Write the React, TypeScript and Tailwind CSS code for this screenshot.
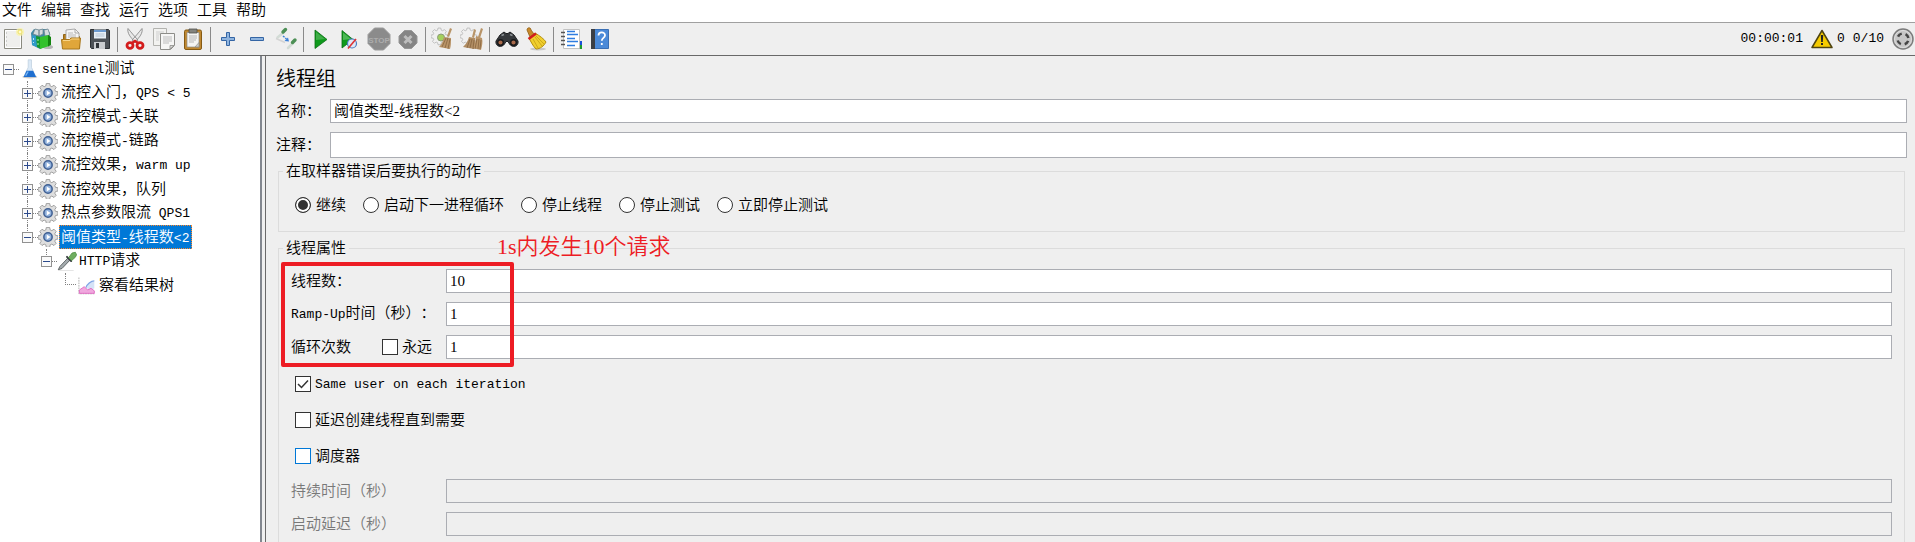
import React from "react";

const CJK = "font-['Liberation_Serif','Noto_Sans_CJK_SC',sans-serif]";

/* Mixed-script label: Latin runs are set monospaced, Chinese runs in the CJK face. */
function Mixed({ text }: { text: string }) {
  const parts = text.split(/([\x20-\x7e]+)/).filter(Boolean);
  return (
    <>
      {parts.map((p, i) =>
        /^[\x20-\x7e]/.test(p) ? (
          <span key={i} className="font-['Liberation_Mono',monospace] text-[13px]">
            {p}
          </span>
        ) : (
          <span key={i}>{p}</span>
        ),
      )}
    </>
  );
}

function Svg({ children, size = 24 }: { children: React.ReactNode; size?: number }) {
  return (
    <svg width={size} height={size} viewBox="0 0 24 24" fill="none" aria-hidden="true" className="block shrink-0">
      {children}
    </svg>
  );
}

const NewIcon = () => (
  <Svg>
    <path d="M3.500 2.500h17v19h-17z" fill="#f4f4f4" stroke="#8a8a80" />
    <path d="M4.500 3.500h15v17h-15z" fill="#efefed" stroke="#fff" />
    <path d="M5 6h1M5 10h1M5 14h1M5 18h1" stroke="#aaa" />
    <circle cx="19" cy="5" r="4" fill="#fbf3a0" opacity=".7" />
    <circle cx="19" cy="5" r="2" fill="#fffbd0" stroke="#efe26a" />
  </Svg>
);
const TemplatesIcon = () => (
  <Svg>
    <ellipse cx="18" cy="20" rx="5" ry="2" fill="#b5b5b5" />
    <path d="M1 6l3-4 5 1 4-1 4 0 3 4-1 12-9 4-8-4z" fill="#3d88a5" />
    <path d="M3 7l2-5 4 1v6zM9 3l4-1v5l-4 2zM14 3l4-1 2 6-5 1z" fill="#d5dcdf" stroke="#6f8791" strokeWidth=".8" />
    <path d="M2 8l5 1v11l-5-2z" fill="#2f9ac8" />
    <path d="M3.500 11v2M3.500 15v1" stroke="#bfe5f5" />
    <path d="M6 9l5 1v12l-4-2z" fill="#159a2c" />
    <path d="M10 10l9-2v11l-9 3z" fill="#33c22c" />
    <path d="M18 8l3 2v8l-3 1.500z" fill="#13840f" />
    <path d="M8 12v2M8 16v2" stroke="#a9efaa" />
  </Svg>
);
const OpenIcon = () => (
  <Svg>
    <path d="M4.500 7.500h5l2 2h9v12h-16z" fill="#b8801c" stroke="#936413" />
    <path d="M7 3l9-1 4 4v8H7z" fill="#f5f5f5" stroke="#999" strokeWidth=".8" />
    <path d="M16 2v4h4" stroke="#999" strokeWidth=".8" />
    <path d="M9 6h5M9 8h8M9 10h8" stroke="#aaa" strokeWidth=".8" />
    <path d="M2.500 12.500h8l1.500-1.500h9.500l-1 11h-17z" fill="#e0a63a" stroke="#a8761a" />
    <path d="M4 13.500h7l1.500-1.500H20" stroke="#f7d488" />
  </Svg>
);
const SaveIcon = () => (
  <Svg>
    <path d="M2.500 2.500h18l1 1v18h-18l-1-1z" fill="#4c5157" stroke="#2c3035" />
    <path d="M6 2.500h12v9H6z" fill="#e9f0f7" />
    <path d="M6 3h12v2H6z" fill="#6d9bd0" />
    <path d="M7.500 7h9M7.500 9h9" stroke="#b3c2d2" />
    <path d="M6 15h11v7H6z" fill="#c9ccd0" />
    <path d="M8 16h3v5H8z" fill="#2f3338" />
  </Svg>
);
const CutIcon = () => (
  <Svg>
    <path d="M5 1.500c-1 4 2 9 8 14l2-2.500C11 9 8 5 5 1.500zM19 1.500c1 4-2 9-8 14L9 13c4-4 7-8 10-11.500z" fill="#e8e8e8" stroke="#8b8b8b" strokeWidth=".9" />
    <ellipse cx="7" cy="18.500" rx="3" ry="2.800" stroke="#d31c1c" strokeWidth="2.800" />
    <ellipse cx="17" cy="18.500" rx="3" ry="2.800" stroke="#d31c1c" strokeWidth="2.800" />
    <path d="M9 16l3-2 3 2" stroke="#d31c1c" strokeWidth="2.500" />
  </Svg>
);
const CopyIcon = () => (
  <Svg>
    <path d="M1.500 1.500h13v17h-13z" fill="#f2f2f0" stroke="#b3b3af" />
    <path d="M4 5h8M4 7h8M4 9h3M4 11h3M4 13h3" stroke="#cfcfcf" />
    <path d="M8.500 6.500h14v12l-4 4h-10z" fill="#f6f6f5" stroke="#8d8d89" />
    <path d="M11 10h9M11 12h9M11 14h9M11 16h6" stroke="#bdbdbd" />
    <path d="M22 18.500h-4V22z" fill="#ddd" stroke="#8d8d89" strokeWidth=".8" />
  </Svg>
);
const PasteIcon = () => (
  <Svg>
    <rect x="3.500" y="3" width="17" height="19.500" rx="1.500" fill="#c08830" stroke="#855a14" />
    <path d="M6 5.500h12v14.500H6z" fill="#f4f4f2" stroke="#8d8d89" strokeWidth=".7" />
    <path d="M8 2h8v4H8z" fill="#83837d" stroke="#50504c" strokeWidth=".8" />
    <path d="M8 9h8M8 11h8M8 13h7M8 15h5" stroke="#b5b5b5" />
    <path d="M18 15.500V20h-4z" fill="#cfcfca" stroke="#8d8d89" strokeWidth=".7" />
  </Svg>
);
const PlusIcon = () => (
  <Svg>
    <path d="M10.500 5.500h3v5h5v3h-5v5h-3v-5h-5v-3h5z" fill="#8fb4de" stroke="#3465a4" />
  </Svg>
);
const MinusIcon = () => (
  <Svg>
    <path d="M5.500 10.500h13v3h-13z" fill="#8fb4de" stroke="#3465a4" />
  </Svg>
);
const ToggleIcon = () => (
  <Svg>
    <path d="M3.500 10.500l6-5M14 21l5-5" stroke="#d3dcd6" strokeWidth="2.500" strokeLinecap="round" />
    <path d="M9 5l2.500-2.500M18.500 15.500l2.500-2.500" stroke="#4c8f55" strokeWidth="3.400" strokeLinecap="round" />
    <path d="M2 11.500l9 4" stroke="#d4d4d4" strokeWidth="1.500" />
    <path d="M9 9l3.500 3" stroke="#3c80d8" strokeWidth="1.500" strokeDasharray="2 1" />
    <path d="M15 14.500l-4.500-.5L14 10.500z" fill="#3c80d8" />
  </Svg>
);
const StartIcon = () => (
  <Svg>
    <path d="M6 3l12 9.500L6 21.500z" fill="#0f9a1c" stroke="#0b6e14" strokeWidth=".8" />
    <path d="M7 5l9 7-9 1z" fill="#3fae48" />
  </Svg>
);
const StartNoPauseIcon = () => (
  <Svg>
    <path d="M4 3.500l11 9L4 21z" fill="#0f9a1c" stroke="#0b6e14" strokeWidth=".8" />
    <path d="M5 5.500l8 6.500-8 1z" fill="#4cb855" />
    <circle cx="14" cy="16.500" r="4.500" fill="#dfe9f6" stroke="#4a7cc0" strokeWidth="1.200" />
    <path d="M10 21.500l8-9.500" stroke="#d33" strokeWidth="1.600" />
  </Svg>
);
const StopIcon = () => (
  <Svg>
    <path d="M7.500 1h9L23 7.500v9L16.500 23h-9L1 16.500v-9z" fill="#8b8b8b" stroke="#9b9b9b" />
    <text x="12" y="15.500" textAnchor="middle" fontSize="8" fontWeight="bold" fontFamily="Liberation Sans" fill="#adadad">
      STOP
    </text>
  </Svg>
);
const ShutdownIcon = () => (
  <Svg>
    <path d="M8.500 3.500h7l5.500 5.500v7l-5.500 5.500h-7L3 16V9z" fill="#858585" stroke="#979797" />
    <path d="M8.500 9l7 7M15.500 9l-7 7" stroke="#bdbdbd" strokeWidth="3" />
  </Svg>
);
const GEAR =
  "M10 1.500h4l.6 3 2 .9 2.600-1.700 2.600 2.700-1.700 2.600.9 2 3 .6v3.800l-3 .6-.9 2 1.700 2.600-2.600 2.600-2.600-1.700-2 .9-.6 3h-4l-.6-3-2-.9-2.600 1.700-2.600-2.600 1.700-2.600-.9-2-3-.6v-3.800l3-.6.9-2-1.700-2.600 2.600-2.700 2.600 1.700 2-.9z";
const ClearIcon = () => (
  <Svg>
    <g transform="translate(0 0) scale(.7)">
      <path d={GEAR} fill="#f0f0f0" stroke="#adadad" />
    </g>
    <circle cx="10" cy="10.500" r="3.500" fill="#a4d05c" stroke="#8a9a78" />
    <path d="M19 1l2 1-3 8-2-1z" fill="#b89468" />
    <path d="M13 10l7 1c0 4 0 8-1 11L8 20c3-3 4-6 5-10z" fill="#b99468" />
    <path d="M15 11l-4 9M17 11l-3 10M19 12l-2 10" stroke="#86643f" strokeWidth=".8" />
  </Svg>
);
const ClearAllIcon = () => (
  <Svg>
    <g transform="translate(0 0) scale(.7)">
      <path d={GEAR} fill="#f0f0f0" stroke="#adadad" />
    </g>
    <path d="M14 2l2 1-2 8-2-1zM21 1l2 1-3 9-2-1z" fill="#b89468" />
    <path d="M9 10l6 1c1 4 0 8-1 11l-11-2c3-3 5-6 6-10z" fill="#b08c62" />
    <path d="M16 9l6 2c1 4 0 8-1 12l-9-2c3-3 4-7 4-12z" fill="#b99468" />
    <path d="M10 12L7 21M12 12l-2 9M14 13l-1 9M17 12l-2 10M19 12l-1 10M21 13l-1 9" stroke="#86643f" strokeWidth=".8" />
  </Svg>
);
const SearchIcon = () => (
  <Svg>
    <path d="M5 8l4-3 2 1.500h2L15 5l4 3 4 6c1 6-6 7-8.500 3L13 14.500h-2L9.500 17C7 21 0 20 1 14z" fill="#35383b" stroke="#1d1f21" />
    <path d="M6.500 8.500l2.500-1M15 7.500l2.500 1" stroke="#8d9296" strokeWidth="1.500" />
    <circle cx="5.500" cy="15.500" r="2.800" fill="#a96a4a" stroke="#16181a" strokeWidth="1.400" />
    <circle cx="18.500" cy="15.500" r="2.800" fill="#a96a4a" stroke="#16181a" strokeWidth="1.400" />
  </Svg>
);
const BroomIcon = () => (
  <Svg>
    <ellipse cx="14" cy="22" rx="8" ry="1.500" fill="#c8c8c8" />
    <path d="M3 3c0-3 4-3 4 0l3 4-4 3z" fill="#c98a2b" stroke="#8f5d12" strokeWidth=".8" />
    <path d="M5 11l6-5c5 3 9 6 11 9-2 4-6 7-10 7-3-3-5-7-7-11z" fill="#f0cf2e" stroke="#b48f10" />
    <path d="M9 12l5 9M11 10l7 9M12 9l8 8" stroke="#c4a015" strokeWidth=".8" />
    <path d="M4.500 12l7.500-5.500" stroke="#d21e1e" strokeWidth="2.600" />
  </Svg>
);
const FunctionIcon = () => (
  <Svg>
    <path d="M18 14h5v4h-5z" fill="#1a4fd8" />
    <path d="M18 18h5v4h-5z" fill="#1b9a2a" />
    <path d="M4.500 2.500h16v19h-16z" fill="#fff" stroke="#c2c2c2" />
    <path d="M2 5.500h4M2 9.500h4M2 13.500h4M2 17.500h4" stroke="#555" strokeWidth="1.600" />
    <path d="M8 4.500h8M8 7.500h11M8 11.500h8M8 14.500h11M8 18.500h8" stroke="#2f7de0" strokeWidth="1.300" />
  </Svg>
);
const HelpIcon = () => (
  <Svg>
    <path d="M3.500 2.500h17v19h-17z" fill="#4b8ad8" stroke="#3a6fb4" />
    <path d="M3 2h4v20H3z" fill="#3b3f45" />
    <path d="M10.500 8.500c0-4 6.500-4 6.500-.3 0 2.800-3.200 2.600-3.200 5.600M13.800 16v2" stroke="#fff" strokeWidth="1.800" />
  </Svg>
);

type Tool = { label: string; icon: () => React.ReactElement } | null;
const tools: Tool[] = [
  { label: "新建", icon: NewIcon },
  { label: "模板", icon: TemplatesIcon },
  { label: "打开", icon: OpenIcon },
  { label: "保存", icon: SaveIcon },
  null,
  { label: "剪切", icon: CutIcon },
  { label: "复制", icon: CopyIcon },
  { label: "粘贴", icon: PasteIcon },
  null,
  { label: "展开全部", icon: PlusIcon },
  { label: "收起全部", icon: MinusIcon },
  { label: "切换", icon: ToggleIcon },
  null,
  { label: "启动", icon: StartIcon },
  { label: "不停顿开始", icon: StartNoPauseIcon },
  { label: "停止", icon: StopIcon },
  { label: "关闭", icon: ShutdownIcon },
  null,
  { label: "清除", icon: ClearIcon },
  { label: "清除全部", icon: ClearAllIcon },
  null,
  { label: "查找", icon: SearchIcon },
  { label: "重置搜索", icon: BroomIcon },
  null,
  { label: "函数助手", icon: FunctionIcon },
  { label: "帮助", icon: HelpIcon },
];

const FlaskIcon = () => (
  <Svg size={20}>
    <ellipse cx="13" cy="21.500" rx="9" ry="1.800" fill="#c9c9c9" />
    <path d="M11 1h4v9l5 11H6l5-11z" fill="#dbe9f6" stroke="#b9cbdd" strokeWidth=".8" />
    <path d="M9 14h8l3.500 7.500h-15z" fill="#1f6fd0" />
    <path d="M11 15l-3 5" stroke="#7cb8f5" strokeWidth="1.500" />
  </Svg>
);
const GearIcon = () => (
  <Svg size={20}>
    <g transform="translate(0 -1)">
      <path d={GEAR} fill="#dedede" stroke="#a0a0a0" strokeWidth="1.200" />
      <circle cx="12" cy="13" r="5" fill="#8fb0dc" stroke="#3f5f92" strokeWidth="1.800" />
      <path d="M10.500 10l4.500 3-4.500 3z" fill="#fff" />
    </g>
  </Svg>
);
const PipetteIcon = () => (
  <Svg size={20}>
    <path d="M2 23.500h18" stroke="#ddd" />
    <path d="M1.500 22.500l2-4L13 8.500l2.500 2.500L6 21z" fill="#a4abae" stroke="#4f5557" />
    <path d="M12 7l5 5" stroke="#3b4043" strokeWidth="2.400" strokeLinecap="round" />
    <path d="M14 8l4-5.500 4-1 1.500 3-1.500 3-4.500 4z" fill="#6fae60" stroke="#4f8f44" />
  </Svg>
);
const ChartIcon = () => (
  <Svg size={20}>
    <path d="M3.500 3v19.500H23" stroke="#a5a5a5" strokeDasharray="2 1" />
    <path d="M12 15c1-4 6-8 10-7v8l-5 3z" fill="#d5e2f7" />
    <path d="M12 15c1-4 6-8 10-8" stroke="#7fa4e6" strokeWidth="1.500" />
    <path d="M4 22v-4l6-4 4 4 4-2 4 3v3z" fill="#f0a8de" stroke="#e05fbe" />
  </Svg>
);

function Expander({ open }: { open: boolean }) {
  return (
    <button
      type="button"
      aria-label={open ? "收起" : "展开"}
      className="relative flex h-[11px] w-[11px] shrink-0 items-center justify-center border border-[#919191] bg-[#fafafa]"
    >
      <span className="h-px w-[7px] bg-[#2c4a8c]" />
      {!open && <span className="absolute h-[7px] w-px bg-[#2c4a8c]" />}
    </button>
  );
}

const threadGroups = [
  "流控入门，QPS < 5",
  "流控模式-关联",
  "流控模式-链路",
  "流控效果，warm up",
  "流控效果，队列",
  "热点参数限流 QPS1",
];

function Guide() {
  return <span className="w-[5px] shrink-0 border-t border-dotted border-[#808080]" />;
}

function Tree() {
  return (
    <nav aria-label="测试计划" className="w-[262px] shrink-0 border-r-2 border-[#82878f] bg-white pt-px text-[15px] leading-6 whitespace-nowrap">
      <div className="flex h-6 items-center pl-[3px]">
        <Expander open />
        <Guide />
        <FlaskIcon />
        <span className="pl-[3px]">
          <Mixed text="sentinel测试" />
        </span>
      </div>
      <ul>
        {threadGroups.map((name) => (
          <li key={name} className="relative flex h-6 items-center pl-[22px]">
            <span className="absolute top-0 left-[27px] h-full border-l border-dotted border-[#808080]" />
            <Expander open={false} />
            <Guide />
            <GearIcon />
            <span className="pl-[3px]">
              <Mixed text={name} />
            </span>
          </li>
        ))}
        <li>
          <div className="relative flex h-6 items-center pl-[22px]">
            <span className="absolute top-0 left-[27px] h-2 border-l border-dotted border-[#808080]" />
            <Expander open />
            <Guide />
            <GearIcon />
            <span className="ml-px h-6 border border-dotted border-[#ff8728] bg-[#0078d7] pr-[2px] pl-px leading-[22px] text-white">
              <Mixed text="阈值类型-线程数<2" />
            </span>
          </div>
          <ul>
            <li>
              <div className="relative flex h-6 items-center pl-[41px]">
                <span className="absolute top-0 left-[46px] h-2 border-l border-dotted border-[#808080]" />
                <Expander open />
                <Guide />
                <PipetteIcon />
                <span className="pl-[2px]">
                  <Mixed text="HTTP请求" />
                </span>
              </div>
              <div className="flex h-6 items-center pl-[65px]">
                <span className="mb-3 h-3 w-[11px] shrink-0 border-b border-l border-dotted border-[#808080]" />
                <ChartIcon />
                <span className="pl-[3px]">察看结果树</span>
              </div>
            </li>
          </ul>
        </li>
      </ul>
    </nav>
  );
}

function Radio({ label, checked }: { label: string; checked?: boolean }) {
  return (
    <label className="flex items-center gap-[5px]">
      <input
        type="radio"
        name="on-error"
        defaultChecked={checked}
        className="h-4 w-4 appearance-none rounded-full border border-[#333] bg-white checked:bg-[#333] checked:shadow-[inset_0_0_0_2px_#fff]"
      />
      {label}
    </label>
  );
}

function Check({ label, checked, active }: { label: string; checked?: boolean; active?: boolean }) {
  return (
    <label className="flex items-center gap-1">
      <span className="relative block h-4 w-4">
        <input
          type="checkbox"
          defaultChecked={checked}
          className={
            "peer block h-4 w-4 appearance-none border bg-white " + (active ? "border-[#0078d7]" : "border-[#333]")
          }
        />
        <svg viewBox="0 0 16 16" className="pointer-events-none absolute inset-0 hidden h-4 w-4 peer-checked:block" aria-hidden="true">
          <path d="M3 8l3.500 3.500L13 4.500" fill="none" stroke="#333" strokeWidth="1.500" />
        </svg>
      </span>
      <span>
        <Mixed text={label} />
      </span>
    </label>
  );
}

const inputBase = "h-6 min-w-0 flex-1 border border-[#abadb3] bg-white px-[3px] text-black outline-none";

function Field({ id, label, value, disabled, extra }: { id: string; label: string; value?: string; disabled?: boolean; extra?: React.ReactNode }) {
  return (
    <div className="flex items-center">
      <div className="flex w-[155px] shrink-0 items-center justify-between pr-[14px]">
        <label htmlFor={id} className={"whitespace-nowrap " + (disabled ? "text-[#787878]" : "")}>
          <Mixed text={label} />
        </label>
        {extra}
      </div>
      <input id={id} defaultValue={value} disabled={disabled} className={inputBase + " disabled:bg-[#efefef]"} />
    </div>
  );
}

const box = "mx-[2px] min-w-0 border border-[#dcdcdc] px-3";
const legend = "-ml-2 px-[3px] leading-5";

export default function App() {
  return (
    <div
      className={
        "flex h-screen flex-col overflow-hidden bg-[#efefef] text-[15px] leading-5 font-[350] text-black [text-spacing-trim:space-all] " +
        CJK
      }
    >
      <nav className="flex h-[22px] shrink-0 items-start gap-[9px] bg-white pl-[2px] font-['Liberation_Sans','Noto_Sans_CJK_SC',sans-serif]">
        {["文件", "编辑", "查找", "运行", "选项", "工具", "帮助"].map((m) => (
          <button key={m} type="button">
            {m}
          </button>
        ))}
      </nav>
      <div className="flex h-[34px] shrink-0 items-center border-t border-b border-t-[#a0a0a0] border-b-[#696969] pl-px">
        {tools.map((t, i) =>
          t ? (
            <button key={i} type="button" aria-label={t.label} className="w-[29px] shrink-0">
              <t.icon />
            </button>
          ) : (
            <span key={i} className="h-[25px] w-1.5 shrink-0 border-l border-[#8a8a8a]" />
          ),
        )}
        <div className="ml-auto flex items-center font-['Liberation_Mono',monospace] text-[13px]">
          <span className="mr-2">00:00:01</span>
          <button type="button" aria-label="日志" className="mr-1">
            <svg width="22" height="20" viewBox="0 0 22 20" aria-hidden="true" className="block">
              <path d="M11 1.500L21 18.500H1z" fill="#f5cb00" stroke="#4f4410" strokeWidth="1.500" strokeLinejoin="round" />
              <path d="M9.800 6h2.400l-.4 7h-1.600zM10 14h2v2h-2z" fill="#222" />
            </svg>
          </button>
          <span className="mr-2">0</span>
          <span className="mr-2">0/10</span>
          <svg width="22" height="22" viewBox="0 0 22 22" fill="none" aria-hidden="true" className="mr-px">
            <circle cx="11" cy="11" r="10" fill="#c6c6c6" stroke="#7c7c7c" strokeWidth="1.500" />
            <circle cx="11" cy="11" r="8.500" stroke="#dedede" />
            <circle cx="11" cy="11" r="5.500" stroke="#454545" strokeWidth="2.500" strokeDasharray="4.640 4" strokeDashoffset="-2" />
          </svg>
        </div>
      </div>
      <div className="flex min-h-0 flex-1">
        <Tree />
        <main className="ml-[3px] min-w-0 flex-1 overflow-hidden border-l border-[#696969] pt-[11px] pr-2 pl-[10px]">
          <h1 className="text-[20px] leading-6">线程组</h1>
          <div className="mt-2 flex items-center">
            <label htmlFor="name" className="w-[54px] shrink-0">
              名称：
            </label>
            <input id="name" defaultValue="阈值类型-线程数<2" className={inputBase + " pb-[3px]"} />
          </div>
          <div className="mt-[9px] flex items-center">
            <label htmlFor="comment" className="w-[54px] shrink-0">
              注释：
            </label>
            <input id="comment" className="h-[26px] min-w-0 flex-1 border border-[#abadb3] bg-white px-[3px] outline-none" />
          </div>
          <fieldset className={box + " mt-[3px] pt-[14px] pb-4"}>
            <legend className={legend}>在取样器错误后要执行的动作</legend>
            <div className="flex gap-[17px] pl-1 whitespace-nowrap">
              <Radio label="继续" checked />
              <Radio label="启动下一进程循环" />
              <Radio label="停止线程" />
              <Radio label="停止测试" />
              <Radio label="立即停止测试" />
            </div>
          </fieldset>
          <div className="relative mt-[6px]">
            <fieldset className={box + " pt-[11px] pb-4"}>
              <legend className={legend}>线程属性</legend>
              <div className="flex flex-col gap-[9px]">
                <Field id="threads" label="线程数：" value="10" />
                <Field id="ramp" label="Ramp-Up时间（秒）：" value="1" />
                <Field id="loops" label="循环次数" value="1" extra={<Check label="永远" />} />
              </div>
              <div className="mt-[7px] mb-[5px] flex flex-col items-start pl-1">
                <div className="flex h-9 items-center">
                  <Check label="Same user on each iteration" checked />
                </div>
                <div className="flex h-9 items-center">
                  <Check label="延迟创建线程直到需要" />
                </div>
                <div className="flex h-9 items-center">
                  <Check label="调度器" active />
                </div>
              </div>
              <div className="flex flex-col gap-[9px]">
                <Field id="duration" label="持续时间（秒）" disabled />
                <Field id="delay" label="启动延迟（秒）" disabled />
              </div>
            </fieldset>
            <div className="pointer-events-none absolute top-6 left-[5px] h-[105px] w-[233px] rounded-[2px] border-4 border-[#ed1c24]" />
            <p className="pointer-events-none absolute -top-[5px] left-[221px] text-[22px] leading-7 whitespace-nowrap text-[#ed1c24]">
              1s内发生10个请求
            </p>
          </div>
        </main>
      </div>
    </div>
  );
}
